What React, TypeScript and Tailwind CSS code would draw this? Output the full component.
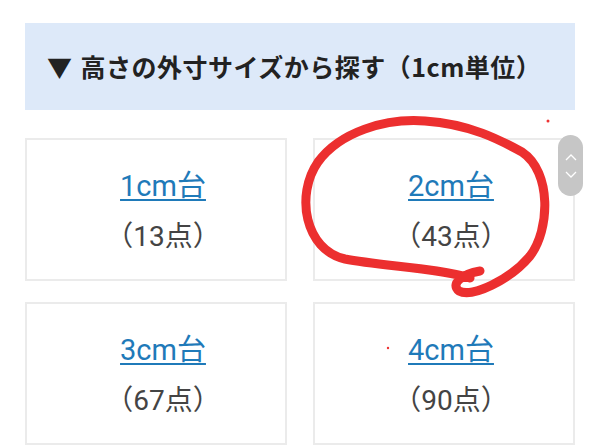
const items = [
  { label: "1cm台", count: 13 },
  { label: "2cm台", count: 43 },
  { label: "3cm台", count: 67 },
  { label: "4cm台", count: 90 },
];

const font = { fontFamily: '"Noto Sans CJK JP", sans-serif' };
const latin = { fontFamily: 'Roboto, "Noto Sans CJK JP", sans-serif' };

export default function App() {
  return (
    <div className="relative w-[600px] h-[447px] overflow-hidden bg-white" style={font}>
      <div className="px-[25px] pt-[23px]">
        <div className="h-[87px] bg-[#dde9f9] flex items-center pl-[22px]">
          <h2 className="text-[25px] font-bold text-[#222] tracking-[0.5px]">
            <span className="mr-[8px]">▼</span>高さの外寸サイズから探す（1cm単位）
          </h2>
        </div>
        <div className="mt-[28px] grid grid-cols-2 gap-x-[26px] gap-y-[21px]">
          {items.map((item) => (
            <div
              key={item.label}
              className="h-[143px] border-2 border-[#ebebeb] flex flex-col items-center pl-[14px] pt-[24px]"
            >
              <a
                href="#"
                className="text-[29px] leading-[44px] text-[#1f7ab9] underline underline-offset-[3px] decoration-2"
                style={latin}
              >
                {item.label}
              </a>
              <p className="mt-[7px] text-[28px] leading-[44px] text-[#444]" style={latin}>
                （{item.count}点）
              </p>
            </div>
          ))}
        </div>
      </div>

      {/* scroll pill */}
      <div className="absolute left-[558px] top-[135px] w-[25px] h-[61px] rounded-full bg-[#c6c6c6] flex flex-col items-center justify-center gap-[10px]">
        <svg width="12" height="7" viewBox="0 0 12 7">
          <path d="M1 6 L6 1 L11 6" stroke="#fff" strokeWidth="1.3" fill="none" />
        </svg>
        <svg width="12" height="7" viewBox="0 0 12 7">
          <path d="M1 1 L6 6 L11 1" stroke="#fff" strokeWidth="1.3" fill="none" />
        </svg>
      </div>

      {/* red hand-drawn circle */}
      <svg className="absolute inset-0 pointer-events-none" width="600" height="447" viewBox="0 0 600 447">
        <path
          d="M 470 278 C 440 268, 380 266, 345 259 C 305 250, 295 195, 318 162 C 340 132, 385 118, 425 121 C 470 124, 500 140, 522 152 C 552 172, 550 230, 530 256 C 510 280, 472 298, 459 291 C 450 284, 462 274, 480 271"
          stroke="#ec2f2f"
          strokeWidth="9"
          fill="none"
          strokeLinecap="round"
          strokeLinejoin="round"
        />
        <circle cx="548" cy="121" r="1.5" fill="#e33" />
        <circle cx="388" cy="348" r="1.2" fill="#e33" />
      </svg>
    </div>
  );
}
